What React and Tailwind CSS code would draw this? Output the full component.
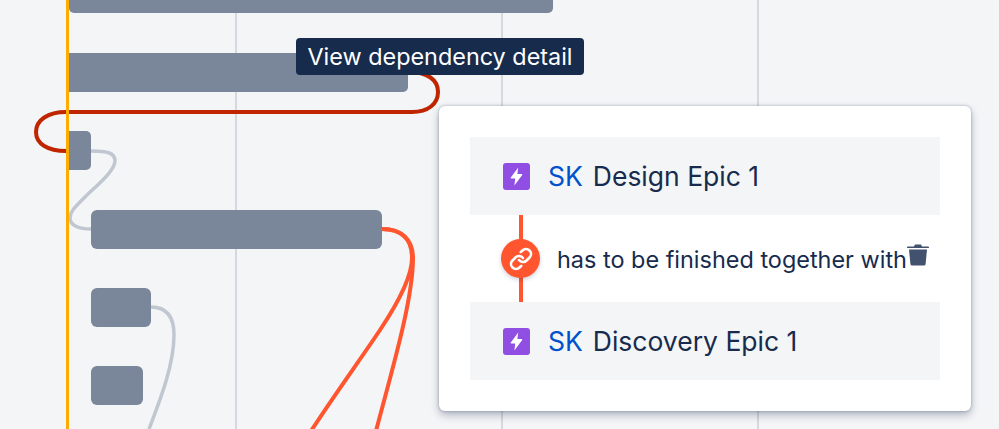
import React from 'react';

const font = { fontFamily: 'Inter, sans-serif' };

const EpicIcon = () => (
    <div className="w-[27px] h-[27px] rounded-[3px] bg-[#904ee2] flex items-center justify-center shrink-0">
        <svg width="15" height="19" viewBox="0 0 15 19">
            <path d="M9.2 0.6 L1.8 10.6 Q1.3 11.5 2.4 11.5 L6.2 11.5 L5.4 18.4 L13.2 7.9 Q13.7 7 12.6 7 L8.4 7 Z" fill="#ffffff" />
        </svg>
    </div>
);

const IssueRow = ({ name }) => (
    <div className="h-[78px] bg-[#f4f5f7] flex items-center pl-[33px] text-[26.5px] leading-none">
        <EpicIcon />
        <span className="ml-[18px] text-[#0052cc]">SK</span>
        <span className="ml-[10px] text-[#172b4d]">{name}</span>
    </div>
);

const App = () => {
    return (
        <div className="relative w-[999px] h-[429px] overflow-hidden bg-[#f4f5f7]" style={font}>
            {/* grid lines */}
            <div className="absolute top-0 bottom-0 left-[235px] w-[2px] bg-[#d5d8de]"></div>
            <div className="absolute top-0 bottom-0 left-[501px] w-[2px] bg-[#d5d8de]"></div>
            <div className="absolute top-0 bottom-0 left-[757px] w-[2px] bg-[#d5d8de]"></div>

            {/* bars */}
            <div className="relative flex flex-col items-start">
                <div className="ml-[69px] w-[484px] h-[13px] bg-[#7a869a] rounded-b-[5px]"></div>
                <div className="ml-[69px] mt-[40px] w-[339px] h-[39px] bg-[#7a869a] rounded-r-[5px]"></div>
                <div className="ml-[69px] mt-[39px] w-[22px] h-[39px] bg-[#7a869a] rounded-r-[5px]"></div>
                <div className="ml-[91px] mt-[40px] w-[291px] h-[39px] bg-[#7a869a] rounded-[6px]"></div>
                <div className="ml-[91px] mt-[39px] w-[60px] h-[39px] bg-[#7a869a] rounded-[6px]"></div>
                <div className="ml-[91px] mt-[39px] w-[52px] h-[39px] bg-[#7a869a] rounded-[6px]"></div>
            </div>

            {/* dependency lines */}
            <svg className="absolute inset-0" width="999" height="429" fill="none" strokeWidth="3.5">
                <path d="M91 151 C108 151 115 153 115 161 C115 171 96 186 84 198 C74 208 70 212 70 218 C70 226 80 229 91 229" stroke="#c1c7d0" />
                <path d="M151 307 C168 307 174 318 174 335 C174 365 160 400 149 429" stroke="#c1c7d0" />
                <path d="M382 229 C402 229 412 240 412 258 C412 275 400 300 380 330 C360 360 335 394 311 431" stroke="#ff5630" strokeWidth="4" />
                <path d="M382 229 C402 229 413 240 413 258 C413 300 392 370 376 431" stroke="#ff5630" strokeWidth="4" />
                <path d="M408 72 C428 72 438 80 438 92 C438 104 428 112 412 112 L66 112 C48 112 36 120 36 132 C36 144 48 151 66 151" stroke="#bf2600" strokeWidth="4" />
            </svg>

            {/* today marker */}
            <div className="absolute top-0 bottom-0 left-[66px] w-[3px] bg-[#ffab00]"></div>

            {/* tooltip */}
            <div className="absolute left-[296px] top-[38px] w-[288px] h-[37px] rounded-[4px] bg-[#172b4d] text-white text-[23.4px] leading-[37px] text-center whitespace-nowrap">
                View dependency detail
            </div>

            {/* popover */}
            <div className="absolute left-[439px] top-[106px] w-[532px] h-[305px] bg-white rounded-[6px] shadow-[0_4px_8px_rgba(9,30,66,0.3),0_0_3px_rgba(9,30,66,0.3)] px-[31px] py-[31px]">
                <IssueRow name="Design Epic 1" />
                <div className="relative h-[87px] flex items-center pl-[31px]">
                    <div className="absolute left-[49px] top-0 bottom-0 w-[4px] bg-[#ff5630]"></div>
                    <div className="relative w-[39px] h-[39px] rounded-full bg-[#ff5630] flex items-center justify-center shadow-[0_2px_4px_rgba(9,30,66,0.2)]">
                        <svg width="24" height="24" viewBox="0 0 24 24" fill="none" stroke="#ffffff" strokeWidth="2.6" strokeLinecap="round" strokeLinejoin="round">
                            <path d="M10 13a5 5 0 0 0 7.54.54l3-3a5 5 0 0 0-7.07-7.07l-1.72 1.71" />
                            <path d="M14 11a5 5 0 0 0-7.54-.54l-3 3a5 5 0 0 0 7.07 7.07l1.71-1.71" />
                        </svg>
                    </div>
                    <span className="ml-[17px] mt-[2px] text-[23.45px] leading-none text-[#172b4d] whitespace-nowrap">has to be finished together with</span>
                    <svg className="mb-[8px] shrink-0" width="22" height="22" viewBox="0 0 22 22" fill="#42526e">
                        <path d="M8 0.5 H14 L15 2.5 H21 Q22 2.5 22 3.5 V4 H0 V3.5 Q0 2.5 1 2.5 H7 Z" />
                        <path d="M2 5.5 H20 L18.6 20 Q18.4 21.5 17 21.5 H5 Q3.6 21.5 3.4 20 Z" />
                    </svg>
                </div>
                <IssueRow name="Discovery Epic 1" />
            </div>
        </div>
    );
};

export default App;
